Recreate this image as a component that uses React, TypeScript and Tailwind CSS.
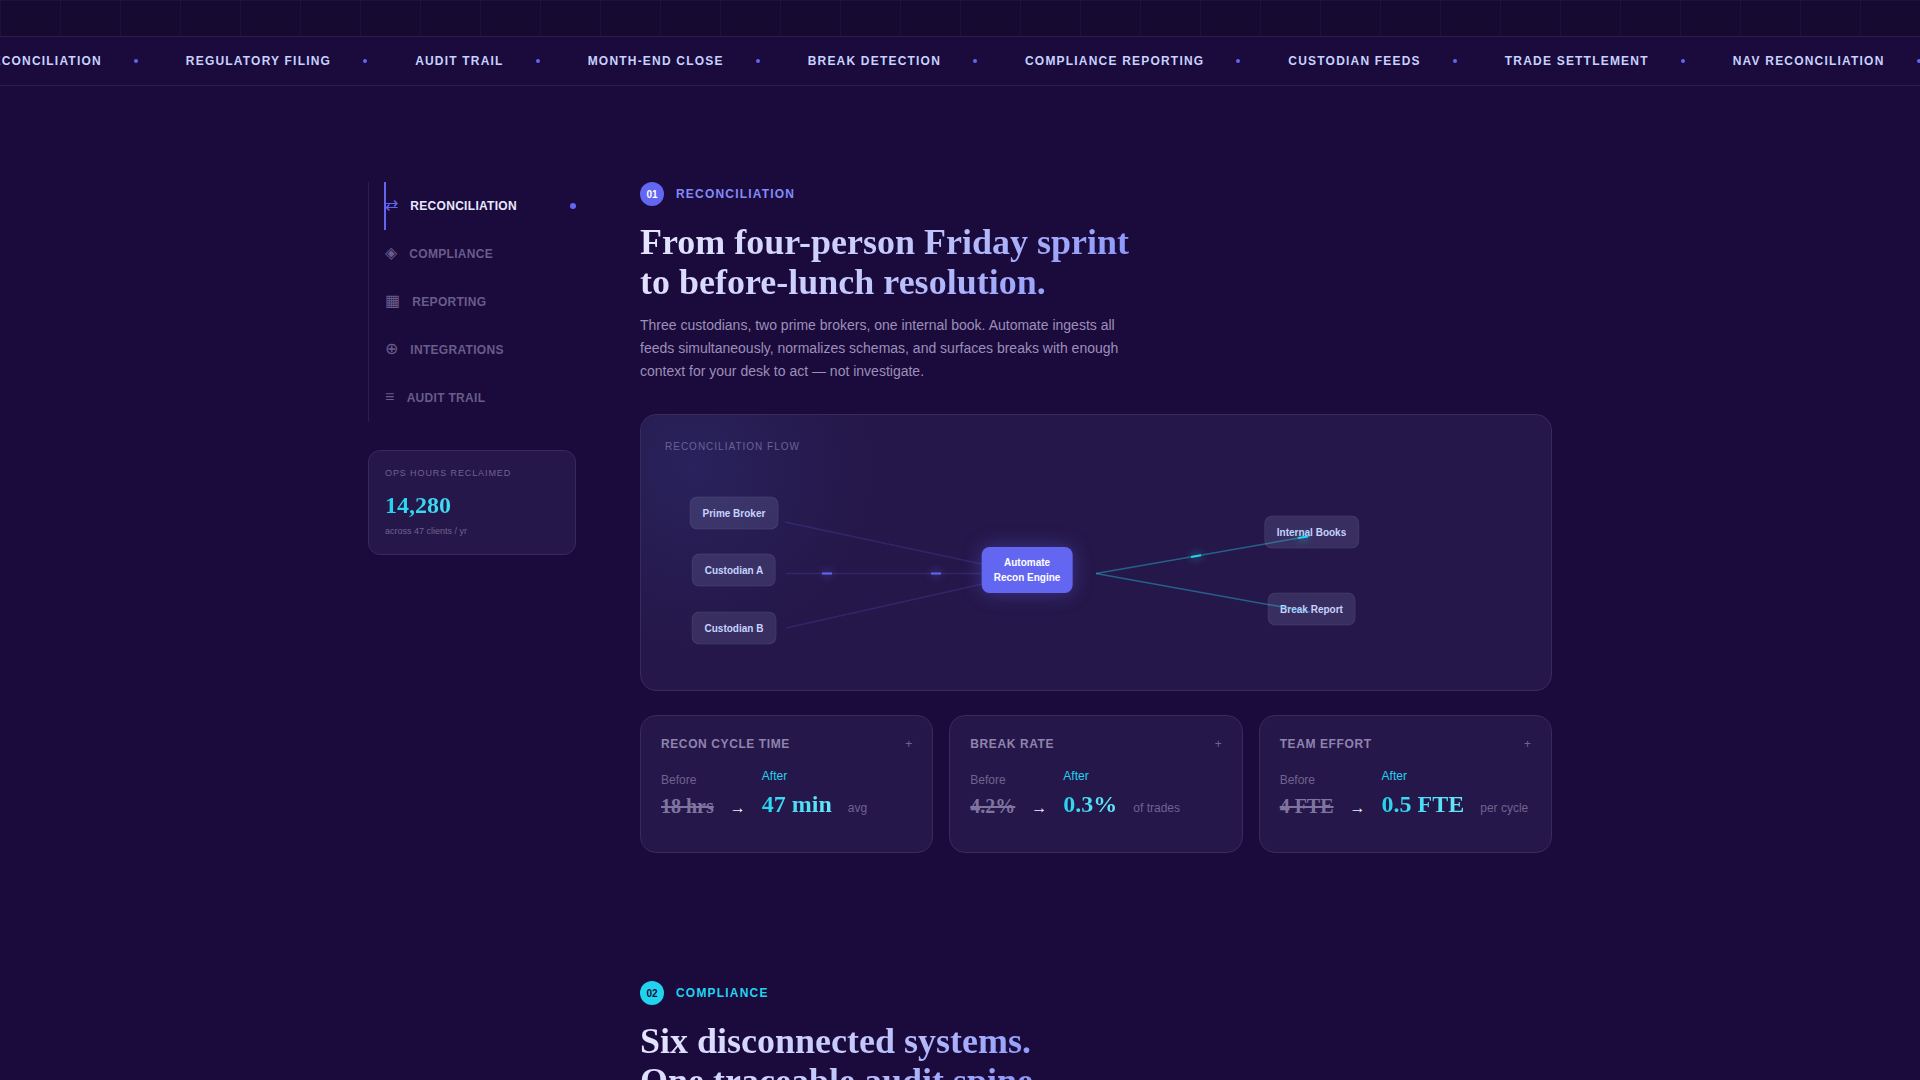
import React from "react";

const TICKER = [
  "NAV Reconciliation",
  "Regulatory Filing",
  "Audit Trail",
  "Month-End Close",
  "Break Detection",
  "Compliance Reporting",
  "Custodian Feeds",
  "Trade Settlement",
];

const NAV = [
  { id: "reconciliation", icon: "⇄", label: "Reconciliation" },
  { id: "compliance", icon: "◈", label: "Compliance" },
  { id: "reporting", icon: "▦", label: "Reporting" },
  { id: "integrations", icon: "⊕", label: "Integrations" },
  { id: "audit", icon: "≡", label: "Audit Trail" },
];

const METRICS = [
  { title: "Recon Cycle Time", before: "18 hrs", after: "47 min", unit: "avg" },
  { title: "Break Rate", before: "4.2%", after: "0.3%", unit: "of trades" },
  { title: "Team Effort", before: "4 FTE", after: "0.5 FTE", unit: "per cycle" },
];

const Ticker: React.FC = () => (
  <div className="overflow-hidden border-y border-[#2b1c4d] py-4">
    <div className="-ml-[50px] flex w-max items-center">
      {[...TICKER, ...TICKER].map((item, i) => (
        <div key={i} className="mr-12 flex items-center gap-8">
          <span className="text-xs font-bold tracking-widest whitespace-nowrap text-[#c7d2fe] uppercase">
            {item}
          </span>
          <span className="size-1 rounded-full bg-[#6366f1]" />
        </div>
      ))}
    </div>
  </div>
);

const Sidebar: React.FC = () => {
  const active = "reconciliation";
  return (
    <aside className="w-52 shrink-0">
      <nav className="mb-7 border-l border-[#2b1c4d] pl-4">
        {NAV.map((item) => (
          <a
            key={item.id}
            href={`#${item.id}`}
            className={`relative flex h-12 items-center gap-3 text-xs font-bold tracking-wide uppercase ${
              item.id === active ? "text-[#e8e8ff]" : "text-[#685c8a]"
            }`}
          >
            {item.id === active && (
              <span className="absolute inset-y-0 -left-px w-0.5 bg-[#6366f1]" />
            )}
            <span
              className={`pb-0.5 text-base font-normal ${
                item.id === active ? "text-[#6366f1]" : ""
              }`}
            >
              {item.icon}
            </span>
            {item.label}
            {item.id === active && (
              <span className="ml-auto size-1.5 rounded-full bg-[#6366f1]" />
            )}
          </a>
        ))}
      </nav>
      <div className="rounded-xl border border-[#382b5c] bg-[#251749] p-4">
        <p className="mb-2.5 text-[9px] leading-3 tracking-widest text-[#6f638f] uppercase">
          Ops hours reclaimed
        </p>
        <p className="bg-linear-to-r from-[#22d3ee] to-[#67e8f9] bg-clip-text font-['Liberation_Serif',serif] text-2xl font-bold text-transparent">
          14,280
        </p>
        <p className="mt-1 text-[9px] leading-[13px] text-[#6f638f]">
          across 47 clients / yr
        </p>
      </div>
    </aside>
  );
};

const SectionHeading: React.FC<{
  num: string;
  label: string;
  lines: string[];
  badge: string;
  accent: string;
}> = ({ num, label, lines, badge, accent }) => (
  <>
    <div className="mb-4 flex items-center gap-3">
      <span
        className={`flex size-6 items-center justify-center rounded-full text-[10px] font-bold ${badge}`}
      >
        {num}
      </span>
      <span className={`text-xs font-bold tracking-widest uppercase ${accent}`}>
        {label}
      </span>
    </div>
    <h2 className="w-fit bg-linear-135 from-[#e8e8ff] via-[#c4c8fc] via-50% to-[#818cf8] bg-clip-text font-['Liberation_Serif',serif] text-4xl font-bold text-transparent">
      {lines[0]}
      <br />
      {lines[1]}
    </h2>
  </>
);

const FlowNode: React.FC<{ className: string; children: React.ReactNode }> = ({
  className,
  children,
}) => (
  <div
    className={`absolute -translate-x-1/2 -translate-y-1/2 rounded-lg border border-white/5 bg-[#c7d2fe]/12 px-3 py-2 text-[10px] leading-[15px] font-bold whitespace-nowrap text-[#c7d2fe] ${className}`}
  >
    {children}
  </div>
);

const FlowCard: React.FC = () => (
  <div className="relative mt-8 overflow-hidden rounded-2xl border border-[#382b5c] bg-[#251749] p-6">
    <div className="pointer-events-none absolute -top-32 -left-32 size-[360px] rounded-full bg-radial from-[#4060c8]/15 to-transparent to-70%" />
    <h3 className="mb-3 text-[10px] leading-[15px] tracking-widest text-[#6f638f] uppercase">
      Reconciliation flow
    </h3>
    <div className="relative h-50">
      <FlowNode className="top-[23.5%] left-[8%]">Prime Broker</FlowNode>
      <FlowNode className="top-[52%] left-[8%]">Custodian A</FlowNode>
      <FlowNode className="top-[81%] left-[8%]">Custodian B</FlowNode>
      <FlowNode className="top-[33%] left-3/4">Internal Books</FlowNode>
      <FlowNode className="top-[71.5%] left-3/4">Break Report</FlowNode>
      <svg
        className="absolute inset-0 size-full overflow-visible"
        viewBox="0 0 862 200"
        preserveAspectRatio="none"
        fill="none"
        aria-hidden="true"
      >
        <g stroke="#6366f1" strokeOpacity="0.2" strokeWidth="1.5">
          <path d="M120 56L340 103" />
          <path d="M121 107.5H340" />
          <path d="M121 162L340 113" />
        </g>
        <g stroke="#22d3ee" strokeOpacity="0.4" strokeWidth="1.5">
          <path d="M431 107.5L645 70" />
          <path d="M431 107.5L645 146" />
        </g>
        <g
          stroke="#6366f1"
          strokeWidth="2"
          className="drop-shadow-[0_0_4px_#6366f1]"
        >
          <path d="M157 107.5H167" />
          <path d="M266 107.5H276" />
        </g>
        <g
          stroke="#22d3ee"
          strokeWidth="2"
          className="drop-shadow-[0_0_4px_#22d3ee]"
        >
          <path d="M526 91L536 89.2" />
          <path d="M633 72.1L643 70.4" />
        </g>
      </svg>
      <div className="absolute top-[52%] left-[42%] -translate-x-1/2 -translate-y-1/2 rounded-lg bg-[#6366f1] px-3 py-2 text-center text-[10px] leading-[15px] font-bold whitespace-nowrap text-white shadow-[0_0_20px_rgba(99,102,241,0.4)]">
        Automate
        <br />
        Recon Engine
      </div>
    </div>
  </div>
);

const MetricCard: React.FC<(typeof METRICS)[number]> = ({
  title,
  before,
  after,
  unit,
}) => (
  <div className="rounded-2xl border border-[#382b5c] bg-[#251749] px-5 pt-5 pb-8">
    <div className="mb-4 flex items-center justify-between text-xs">
      <h3 className="font-bold tracking-wider text-[#8f84ae] uppercase">{title}</h3>
      <button type="button" aria-label="Expand" className="text-[#6f638f]">
        +
      </button>
    </div>
    <div className="flex items-end gap-4">
      <div>
        <p className="mb-1 text-xs text-[#6f638f]">Before</p>
        <p className="font-['Liberation_Serif',serif] text-xl font-bold whitespace-nowrap text-[#7f74a0] line-through">
          {before}
        </p>
      </div>
      <span className="text-base text-[#f0f0ff]">→</span>
      <div>
        <p className="mb-1 text-xs text-[#22d3ee]">After</p>
        <p className="bg-linear-to-r from-[#22d3ee] to-[#67e8f9] bg-clip-text font-['Liberation_Serif',serif] text-2xl font-bold whitespace-nowrap text-transparent">
          {after}
        </p>
      </div>
      <span className="pb-1 text-xs whitespace-nowrap text-[#6f638f]">{unit}</span>
    </div>
  </div>
);

const App: React.FC = () => {
  return (
    <div className="h-screen overflow-hidden bg-[#1b0a3c] font-['Liberation_Sans',Arial,sans-serif] text-[#f0f0ff]">
      <div className="h-9 bg-[#160a31] bg-[linear-gradient(rgba(129,140,248,0.06)_1px,transparent_1px),linear-gradient(90deg,rgba(129,140,248,0.06)_1px,transparent_1px)] bg-size-[60px_60px]" />
      <Ticker />
      <main className="mx-auto flex max-w-7xl items-start gap-16 px-12 py-24">
        <Sidebar />
        <div className="flex min-w-0 flex-1 flex-col gap-32">
          <section id="reconciliation">
            <SectionHeading
              num="01"
              label="Reconciliation"
              lines={["From four-person Friday sprint", "to before-lunch resolution."]}
              badge="bg-[#6366f1] text-white"
              accent="text-[#818cf8]"
            />
            <p className="mt-3 max-w-lg text-sm leading-relaxed text-[#9b90b8]">
              Three custodians, two prime brokers, one internal book. Automate
              ingests all feeds simultaneously, normalizes schemas, and surfaces
              breaks with enough context for your desk to act — not investigate.
            </p>
            <FlowCard />
            <div className="mt-6 grid grid-cols-3 gap-4">
              {METRICS.map((m) => (
                <MetricCard key={m.title} {...m} />
              ))}
            </div>
          </section>
          <section id="compliance">
            <SectionHeading
              num="02"
              label="Compliance"
              lines={["Six disconnected systems.", "One traceable audit spine."]}
              badge="bg-[#22d3ee] text-[#1b0a3c]"
              accent="text-[#22d3ee]"
            />
          </section>
        </div>
      </main>
    </div>
  );
};

export default App;
